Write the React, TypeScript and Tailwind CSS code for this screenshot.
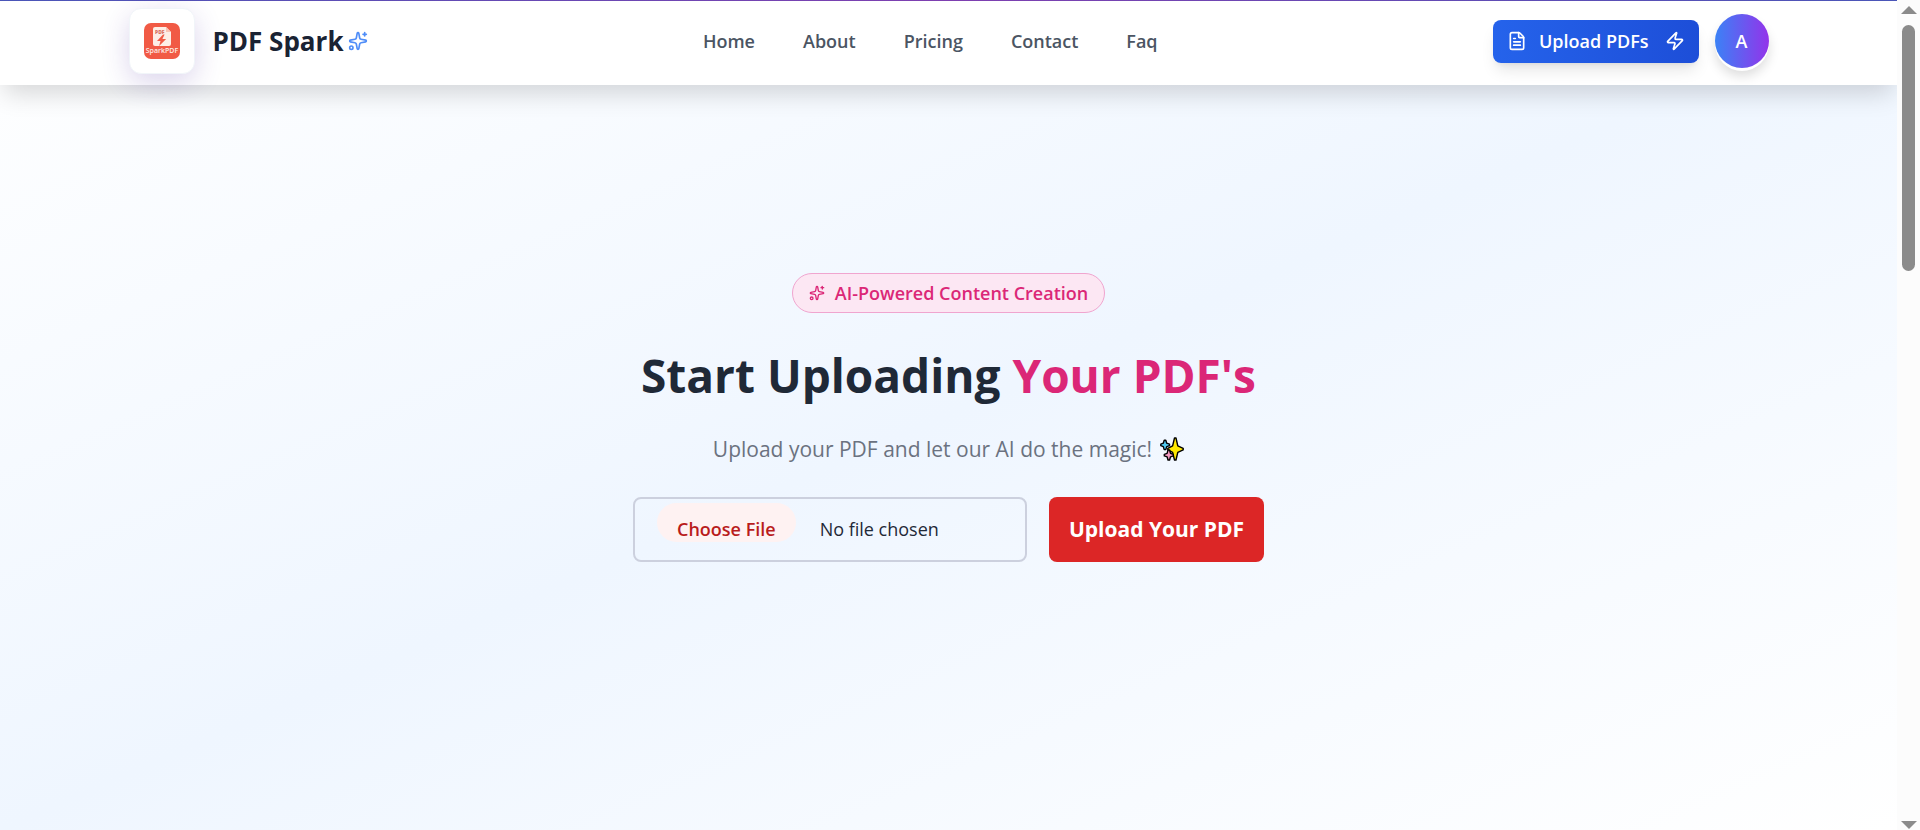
import { FileText, Sparkles, Zap } from "lucide-react";

const navLinks = [
  { label: "Home", href: "#home" },
  { label: "About", href: "#about" },
  { label: "Pricing", href: "#pricing" },
  { label: "Contact", href: "#contact" },
  { label: "Faq", href: "#faq" },
];

const LogoMark = () => (
  <svg viewBox="0 0 36 36" className="w-9 h-9" role="img" aria-label="SparkPDF">
    <rect width="36" height="36" rx="7" fill="#f15a45" />
    <path d="M11 4h11l5 5v12a2 2 0 0 1-2 2H11a2 2 0 0 1-2-2V6a2 2 0 0 1 2-2Z" fill="#fdeee6" />
    <path d="M22 4v5h5Z" fill="#fbc3b4" />
    <text x="11" y="11" fontSize="5" fontWeight="800" fill="#d9705f">PDF</text>
    <path d="M19 11.500 13 18h3.500l-1.400 5 7-7h-3.700l2.200-4.500Z" fill="#f15a45" />
    <text x="18" y="30" fontSize="7" fontWeight="600" textAnchor="middle" fill="#fdeee6">SparkPDF</text>
  </svg>
);

const MagicSparkles = () => (
  <svg viewBox="0 0 24 24" className="w-6 h-6" stroke="#000" strokeWidth="1.4" strokeLinejoin="round" aria-hidden="true">
    <path d="M4.200 3.200h1.600l.9 3 2.800.9v1.600l-2.800.9-.9 3h-1.600l-.9-3-2.500-.9v-1.600l2.500-.9Z" fill="#50c8ef" />
    <path d="M14.500 1h1.500l1.800 7.800 5.400 2.500v1.500l-5.400 2.500-1.800 7.700h-1.500l-1.900-7.700-4.800-2.500v-1.500l4.800-2.500Z" fill="#ffe900" />
    <path d="M8 13h1.600l.9 3.400 2.800.9v1.600l-2.800.9-.9 3.200h-1.600l-.9-3.200-2.800-.9v-1.600l2.800-.9Z" fill="#f49ac1" />
  </svg>
);

const Header = () => (
  <header className="relative z-10 bg-white shadow-[0_12px_24px_-4px_rgba(0,0,0,0.16)]">
    <div className="h-px bg-[linear-gradient(to_right,#4a56b8,#7e3fb0,#4a56b8)]" />
    <div className="h-21 pb-1 max-w-[1640px] mx-auto flex items-center justify-between">
      <a href="#home" className="flex items-center">
        <span className="w-[66px] h-[66px] rounded-xl bg-white border border-slate-100 flex items-center justify-center shadow-[0_8px_28px_rgba(76,40,160,0.2)]">
          <LogoMark />
        </span>
        <span className="ml-[18px] text-[26px] leading-8 font-bold text-[#1a2333]">PDF Spark</span>
        <Sparkles className="ml-1 w-5 h-5 text-[#4f8df8]" />
      </a>

      <nav className="flex items-center gap-12">
        {navLinks.map((link) => (
          <a key={link.label} href={link.href} className="text-[18px] leading-7 font-semibold text-[#4b5563]">
            {link.label}
          </a>
        ))}
      </nav>

      <div className="flex items-center gap-4">
        <button className="h-[43px] px-3.5 rounded-lg flex items-center text-white text-[18px] font-semibold bg-[linear-gradient(to_right,#2563eb,#1d4ed8)] shadow-lg">
          <FileText className="w-5 h-5 mr-3" />
          Upload PDFs
          <Zap className="w-5 h-5 ml-4" />
        </button>
        <button
          aria-label="Account"
          className="w-[54px] h-[54px] rounded-full text-white text-[18px] font-semibold bg-[linear-gradient(to_right,#3b82f6,#9333ea)] shadow-[0_3px_0_#fff,0_8px_12px_rgba(0,0,0,0.14)]"
        >
          A
        </button>
      </div>
    </div>
  </header>
);

const UploadForm = () => (
  <form className="mt-8 flex gap-[22px]" onSubmit={(e) => e.preventDefault()}>
    <input
      type="file"
      accept="application/pdf"
      aria-label="PDF file"
      className="w-[394px] h-[65px] pl-[22px] pt-1 rounded-lg border-2 border-[#ccd0de] text-[18px] text-[#1f2937] file:h-[39px] file:mr-6 file:px-5 file:pt-3 file:rounded-full file:bg-[#fef2f2] file:text-[#b91c1c] file:text-[18px] file:leading-6 file:font-semibold"
    />
    <button type="submit" className="w-[215px] h-[65px] rounded-lg bg-[#dc2626] text-white text-[21px] font-bold">
      Upload Your PDF
    </button>
  </form>
);

const ScrollRail = () => (
  <div aria-hidden="true" className="w-[23px] shrink-0 bg-[#fcfcfc] flex flex-col items-center pt-1.5 pb-px">
    <svg viewBox="0 0 16 8" className="w-4 h-2" fill="#8b8b8b">
      <path d="M0 8 8 0l8 8Z" />
    </svg>
    <div className="mt-[11px] w-[13px] h-[246px] rounded-full bg-[#8b8b8b]" />
    <svg viewBox="0 0 16 8" className="mt-auto w-4 h-2" fill="#8b8b8b">
      <path d="M0 0h16L8 8Z" />
    </svg>
  </div>
);

export default function App() {
  return (
    <div className="min-h-screen flex font-['Open_Sans','Noto_Sans',sans-serif]">
      <div className="flex-1 flex flex-col overflow-hidden bg-[linear-gradient(to_bottom_right,#ffffff,#eff6ff,#ffffff)]">
        <Header />
        <main className="flex-1 flex flex-col items-center justify-center pb-20">
          <div className="h-10 px-4 flex items-center gap-2.5 rounded-full border border-[#f0a5cf] bg-[#fce7f3] text-[#db2777] text-[18px] font-semibold">
            <Sparkles className="w-4 h-4" />
            AI-Powered Content Creation
          </div>
          <h1 className="mt-8 text-[46px] leading-[60px] font-bold text-[#1f2937]">
            Start Uploading <span className="text-[#db2777]">Your PDF's</span>
          </h1>
          <p className="mt-7 flex items-center gap-2 text-[21px] leading-8 text-[#6b7280]">
            Upload your PDF and let our AI do the magic!
            <MagicSparkles />
          </p>
          <UploadForm />
        </main>
      </div>
      <ScrollRail />
    </div>
  );
}
